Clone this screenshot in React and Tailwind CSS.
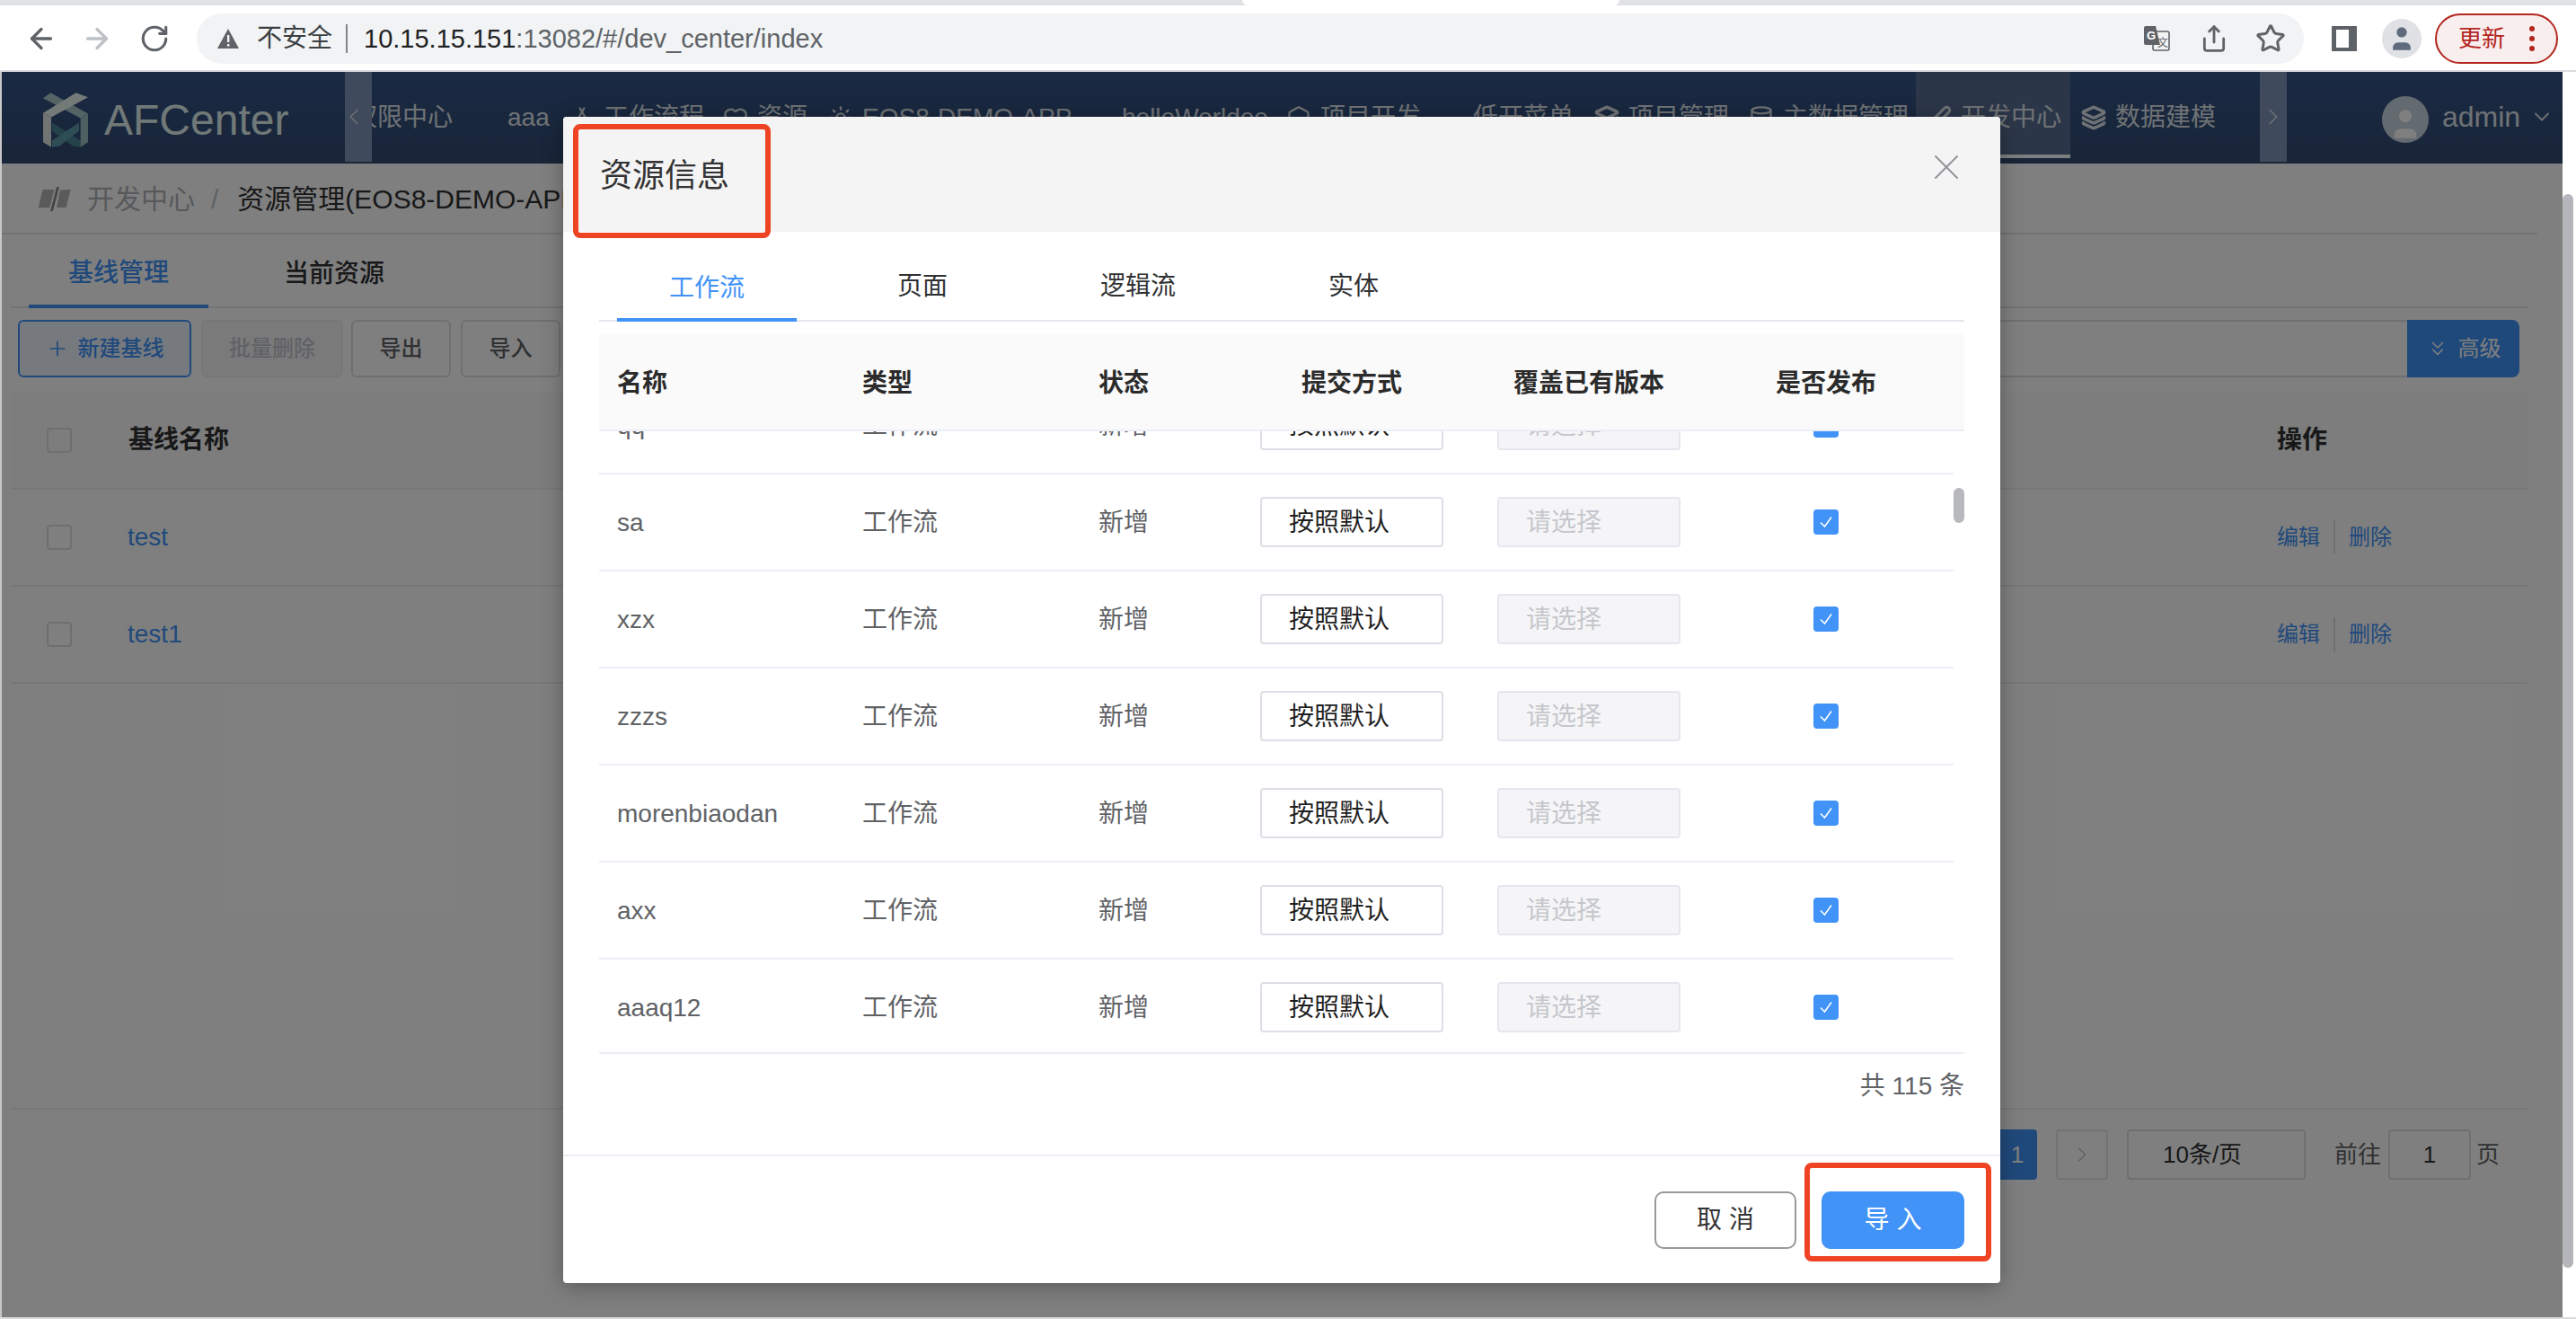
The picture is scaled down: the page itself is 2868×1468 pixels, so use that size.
import { ArrowLeft, ArrowRight, ChevronDown, ChevronLeft, ChevronRight, ChevronsDown, Database, Heart, Hexagon, Layers, PenLine, Plus, RotateCw, Share, Star, Sun, Tent, User, X } from "lucide-react";

const font = { fontFamily: '"Liberation Sans", "Noto Sans CJK SC", sans-serif' };

const rows = [
  { name: "qq" },
  { name: "sa" },
  { name: "xzx" },
  { name: "zzzs" },
  { name: "morenbiaodan" },
  { name: "axx" },
  { name: "aaaq12" },
];

function BrowserBar() {
  return (
    <div className="h-[80px] shrink-0 bg-white">
      <div className="flex h-[6px] bg-[#dfe1e5]">
        <div className="ml-[1383px] h-full w-[420px] rounded-b-[8px] bg-white" />
      </div>
      <div className="flex h-[74px] items-center border-b-2 border-[#dadce0] pt-[2px]">
        <ArrowLeft className="ml-[28px] text-[#5f6368]" size={36} strokeWidth={2.2} />
        <ArrowRight className="ml-[26px] text-[#bdc1c6]" size={36} strokeWidth={2.2} />
        <RotateCw className="ml-[29px] text-[#5f6368]" size={34} strokeWidth={2.2} />
        <div className="ml-[30px] flex h-[56px] w-[2346px] items-center rounded-full bg-[#f1f3f4]">
          <svg className="ml-[22px] text-[#5f6368]" width="26" height="24" viewBox="0 0 26 24">
            <path d="M13 1 25 23H1Z" fill="currentColor" />
            <rect x="12" y="8" width="2.4" height="8" fill="#f1f3f4" />
            <rect x="12" y="18" width="2.4" height="2.6" fill="#f1f3f4" />
          </svg>
          <span className="ml-[19px] text-[28px] leading-none text-[#3c4043]">不安全</span>
          <div className="ml-[15px] h-[32px] w-[2px] bg-[#80868b]" />
          <div className="ml-[18px] text-[29px] leading-none text-[#5f6368]">
            <span className="text-[#202124]">10.15.15.151</span>:13082/#/dev_center/index
          </div>
          <svg className="ml-auto" width="30" height="30" viewBox="0 0 30 30">
            <rect x="11" y="7" width="18" height="21" rx="2" fill="#f1f3f4" stroke="#5f6368" strokeWidth="1.6" />
            <path d="M3 1h11l5 21H3a2 2 0 0 1-2-2V3a2 2 0 0 1 2-2Z" fill="#5f6368" />
            <text x="4" y="16" fontSize="13" fontWeight="700" fill="#fff">G</text>
            <text x="16" y="24" fontSize="12" fill="#5f6368">文</text>
          </svg>
          <Share className="ml-[33px] text-[#5f6368]" size={32} strokeWidth={2.1} />
          <Star className="ml-[30px] mr-[20px] text-[#5f6368]" size={34} strokeWidth={2.1} />
        </div>
        <svg className="ml-[31px]" width="28" height="28" viewBox="0 0 28 28">
          <path d="M0 0h28v28H0Z" fill="#5f6368" />
          <rect x="5" y="4" width="14" height="20" fill="#fff" />
        </svg>
        <div className="ml-[28px] flex h-[44px] w-[44px] items-center justify-center overflow-hidden rounded-full bg-[#dfe1e5]">
          <User className="text-[#5f6b7d]" size={34} fill="currentColor" strokeWidth={0} />
        </div>
        <div className="ml-[15px] flex h-[56px] w-[137px] items-center rounded-full border-2 border-[#b3261e] bg-[#f9eeee]">
          <span className="ml-[24px] text-[26px] leading-none text-[#b3261e]">更新</span>
          <div className="ml-[27px] flex flex-col gap-[5px]">
            <span className="h-[6px] w-[6px] rounded-full bg-[#b3261e]" />
            <span className="h-[6px] w-[6px] rounded-full bg-[#b3261e]" />
            <span className="h-[6px] w-[6px] rounded-full bg-[#b3261e]" />
          </div>
        </div>
      </div>
    </div>
  );
}

function Logo() {
  return (
    <svg className="shrink-0" width="50" height="62" viewBox="0 0 150 185">
      <path d="M30 100 125 160V182L100 178 30 128Z" fill="#4a8494" />
      <path d="M120 100 30 160V182L55 178 120 128Z" fill="#5e9aa8" />
      <path d="M0 18 25 0 150 70 125 85Z" fill="#a8c8c8" />
      <path d="M0 68 110 0 150 15 27 82Z" fill="#e8f4f0" />
      <path d="M0 68 27 82V182L0 165Z" fill="#e0e8e4" />
      <path d="M125 85 150 70V165L125 182Z" fill="#9cc0c0" />
    </svg>
  );
}

function NavItem({ icon: Icon, label, width, active, iconStroke = 2 }) {
  return (
    <div className={`flex h-[96px] shrink-0 items-center ${width} ${active ? "border-b-[4px] border-[#f8ffff] bg-[#566c90] pt-[10px]" : "pt-[6px]"}`}>
      {Icon && <Icon className="ml-[12px] mr-[10px] shrink-0 text-[#dfe5ea]" size={28} strokeWidth={iconStroke} />}
      <span className="whitespace-nowrap text-[28px] leading-none text-[#dfe5ea]">{label}</span>
    </div>
  );
}

function TopNav() {
  return (
    <div className="flex h-[102px] shrink-0 items-start bg-gradient-to-b from-[#345488] to-[#324a70]">
      <div className="ml-[46px] mt-[23px] flex w-[336px] items-center gap-[18px]">
        <Logo />
        <span className="text-[48px] leading-none text-[#e0f2f0]">AFCenter</span>
      </div>
      <div className="flex h-[100px] w-[30px] shrink-0 items-center bg-[#7e95b8]">
        <ChevronLeft className="-ml-[5px] text-[#dfe5ea]" size={30} strokeWidth={1.2} />
      </div>
      <div className="flex h-[96px] w-[2102px] overflow-hidden">
        <div className="flex shrink-0 -translate-x-[22px] items-start">
          <NavItem label="权限中心" width="w-[173px]" />
          <NavItem label="aaa" width="w-[57px]" />
          <NavItem icon={Tent} label="工作流程" width="w-[171px]" />
          <NavItem icon={Heart} label="资源" width="w-[117px]" />
          <NavItem icon={Sun} label="EOS8-DEMO-APP" width="w-[339px]" />
          <NavItem label="helloWorldee" width="w-[171px]" />
          <NavItem icon={Hexagon} label="项目开发" width="w-[220px]" />
          <NavItem label="低开菜单" width="w-[123px]" />
          <NavItem icon={Layers} label="项目管理" width="w-[172px]" iconStroke={3} />
          <NavItem icon={Database} label="主数据管理" width="w-[198px]" />
          <NavItem icon={PenLine} label="开发中心" width="w-[172px]" iconStroke={2.6} active />
          <NavItem icon={Layers} label="数据建模" width="w-[170px]" iconStroke={3} />
        </div>
      </div>
      <div className="flex h-[100px] w-[30px] shrink-0 items-center bg-[#7e95b8]">
        <ChevronRight className="text-[#dfe5ea]" size={30} strokeWidth={1.2} />
      </div>
      <div className="ml-[106px] mt-[27px] flex h-[52px] w-[52px] shrink-0 items-end justify-center overflow-hidden rounded-full bg-[#c6d4e0]">
        <User className="text-white" size={42} fill="currentColor" strokeWidth={0} />
      </div>
      <span className="ml-[15px] mt-[34px] text-[32px] leading-none text-[#dfe5ea]">admin</span>
      <ChevronDown className="ml-[10px] mt-[36px] text-[#dfe5ea]" size={28} strokeWidth={1.6} />
    </div>
  );
}

function Checkbox() {
  return <div className="h-[28px] w-[28px] rounded-[4px] border-2 border-[#dcdfe6]" />;
}

function BaselineRow({ name }) {
  return (
    <div className="flex h-[108px] items-center border-b-2 border-[#ebeef5] pl-[40px]">
      <Checkbox />
      <span className="ml-[62px] text-[28px] leading-none text-[#4193f7]">{name}</span>
      <div className="ml-auto flex w-[279px] items-center text-[24px] leading-none text-[#4193f7]">
        <span>编辑</span>
        <div className="mx-[15px] h-[38px] w-[2px] bg-[#dcdfe6]" />
        <span>删除</span>
      </div>
    </div>
  );
}

function PageBody() {
  return (
    <div className="flex min-w-0 flex-1 flex-col">
      <TopNav />
      <div className="mr-[28px] flex h-[79px] items-center border-b-2 border-[#e4e7ed] pl-[40px] pt-[2px]">
        <svg width="37" height="28" viewBox="0 -2 37 28">
          <path d="M5.6 1H18.3L13.3 21H.6Z" fill="#b4b4b4" />
          <path d="M21 -2H24L17 25H14Z" fill="#8c8c8c" />
          <path d="M25 1.6 36.6 1 31.6 21H21Z" fill="#b4b4b4" />
        </svg>
        <span className="ml-[18px] text-[30px] leading-none text-[#b0b3b8]">开发中心</span>
        <span className="ml-[18px] text-[30px] leading-none text-[#c0c4cc]">/</span>
        <span className="ml-[21px] whitespace-nowrap text-[30px] leading-none text-[#303133]">资源管理(EOS8-DEMO-APP)</span>
      </div>
      <div className="ml-[10px] mr-[39px] flex h-[82px] items-end border-b-2 border-[#e4e7ed]">
        <div className="-mb-[2px] ml-[20px] flex h-[78px] w-[200px] items-center justify-center border-b-4 border-[#4193f7] pt-[3px] text-[28px] leading-none font-medium text-[#4193f7]">基线管理</div>
        <div className="-mb-[2px] ml-[40px] flex h-[78px] w-[200px] items-center justify-center pt-[1px] text-[28px] leading-none font-medium text-[#303133]">当前资源</div>
      </div>
      <div className="ml-[18px] mr-[48px] mt-[13px] flex h-[64px]">
        <button className="flex h-full w-[193px] items-center justify-center gap-[10px] rounded-[6px] border-2 border-[#4193f7] bg-[#ecf5ff] text-[24px] leading-none font-medium text-[#4193f7]">
          <Plus size={26} strokeWidth={1.6} />
          新建基线
        </button>
        <button className="ml-[11px] h-full w-[158px] rounded-[6px] border-2 border-[#ebeef5] bg-[#f5f5f5] text-[24px] leading-none font-medium text-[#c0c4cc]">批量删除</button>
        <button className="ml-[9px] h-full w-[111px] rounded-[6px] border-2 border-[#dcdfe6] bg-white text-[24px] leading-none font-medium text-[#606266]">导出</button>
        <button className="ml-[11px] h-full w-[111px] rounded-[6px] border-2 border-[#dcdfe6] bg-white text-[24px] leading-none font-medium text-[#606266]">导入</button>
        <div className="ml-[40px] h-full flex-1 border-y-2 border-[#dcdfe6]" />
        <button className="flex h-full w-[125px] items-center justify-center gap-[10px] rounded-r-[8px] bg-[#4193f7] text-[24px] leading-none text-white">
          <ChevronsDown size={26} strokeWidth={1.4} />
          高级
        </button>
      </div>
      <div className="ml-[10px] mr-[39px] mt-[16px]">
        <div className="flex h-[109px] items-center border-b-2 border-[#ebeef5] bg-[#fafafa] pl-[40px]">
          <Checkbox />
          <span className="ml-[63px] text-[28px] leading-none font-semibold text-[#303133]">基线名称</span>
          <span className="ml-auto w-[279px] text-[28px] leading-none font-semibold text-[#303133]">操作</span>
        </div>
        <BaselineRow name="test" />
        <BaselineRow name="test1" />
      </div>
      <div className="ml-[10px] mr-[39px] mt-[472px] flex h-[80px] items-end justify-end border-t-2 border-[#ebeef5] text-[26px] leading-none text-[#606266]">
        <div className="flex h-[56px] items-center">
          <div className="flex h-full w-[44px] items-center justify-center rounded-[4px] bg-[#4193f7] text-white">1</div>
          <div className="ml-[21px] flex h-full w-[58px] items-center justify-center rounded-[4px] border-2 border-[#e4e7ed]">
            <ChevronRight className="text-[#c0c4cc]" size={28} strokeWidth={1.4} />
          </div>
          <div className="ml-[21px] flex h-full w-[199px] items-center rounded-[4px] border-2 border-[#dcdfe6] pl-[38px] text-[#303133]">10条/页</div>
          <span className="ml-[32px]">前往</span>
          <div className="ml-[8px] flex h-full w-[92px] items-center justify-center rounded-[4px] border-2 border-[#dcdfe6] text-[#303133]">1</div>
          <span className="ml-[6px] mr-[31px]">页</span>
        </div>
      </div>
    </div>
  );
}

function ResourceRow({ name }) {
  return (
    <div className="grid h-[108px] grid-cols-[273px_263px_170px_264px_264px_264px] items-center border-b-2 border-[#ebeef5] text-[28px] leading-none text-[#606266]">
      <span className="pl-[20px] pt-[2px]">{name}</span>
      <span className="pl-[20px] pt-[2px]">工作流</span>
      <span className="pl-[20px] pt-[2px]">新增</span>
      <div className="flex justify-center">
        <div className="flex h-[56px] w-[204px] items-center rounded-[4px] border-2 border-[#dcdfe6] pl-[30px] pt-[2px] text-[#1f1f1f]">按照默认</div>
      </div>
      <div className="flex justify-center">
        <div className="flex h-[56px] w-[204px] items-center rounded-[4px] border-2 border-[#e4e7ed] bg-[#f5f5f7] pl-[30px] pt-[2px] text-[#c5c7cc]">请选择</div>
      </div>
      <div className="flex justify-center">
        <div className="flex h-[28px] w-[28px] items-center justify-center rounded-[4px] bg-[#4193f7]">
          <svg width="18" height="18" viewBox="0 0 18 18" fill="none" stroke="#fff" strokeWidth="1.6">
            <path d="M3 9.5 7.5 14 15 3.5" />
          </svg>
        </div>
      </div>
    </div>
  );
}

function ResourceModal() {
  return (
    <div className="absolute left-[625px] top-[50px] flex h-[1298px] w-[1600px] flex-col rounded-[4px] bg-white shadow-[0_4px_24px_rgba(0,0,0,0.3)]">
      <div className="flex h-[128px] shrink-0 items-start justify-between rounded-t-[4px] bg-[#f4f4f4] pl-[41px] pr-[36px]">
        <span className="mt-[48px] text-[36px] leading-none text-[#333333]">资源信息</span>
        <X className="mt-[32px] text-[#909399]" size={48} strokeWidth={1} />
      </div>
      <div className="mx-[40px] flex h-[100px] shrink-0 items-end border-b-2 border-[#e4e7ed] text-[28px] leading-none text-[#303133]">
        <div className="-mb-[2px] ml-[20px] flex h-[54px] w-[200px] items-start justify-center border-b-4 border-[#4193f7] pt-[3px] text-[#4193f7]">工作流</div>
        <div className="ml-[40px] flex h-[54px] w-[200px] items-start justify-center pt-[3px]">页面</div>
        <div className="ml-[40px] flex h-[54px] w-[200px] items-start justify-center pt-[3px]">逻辑流</div>
        <div className="ml-[40px] flex h-[54px] w-[200px] items-start justify-center pt-[3px]">实体</div>
      </div>
      <div className="relative mx-[40px] mt-[14px] shrink-0">
        <div className="grid h-[108px] grid-cols-[273px_263px_170px_264px_264px_264px] items-center border-b-2 border-[#ebeef5] bg-[#fafafa] pt-[3px] text-[28px] leading-none font-semibold text-[#2b2b2b]">
          <span className="pl-[20px]">名称</span>
          <span className="pl-[20px]">类型</span>
          <span className="pl-[20px]">状态</span>
          <span className="text-center">提交方式</span>
          <span className="text-center">覆盖已有版本</span>
          <span className="text-center">是否发布</span>
        </div>
        <div className="h-[693px] overflow-hidden border-b-2 border-[#ebeef5]">
          <div className="-mt-[60px] w-[1508px]">
            {rows.map((r) => (
              <ResourceRow key={r.name} name={r.name} />
            ))}
          </div>
        </div>
        <div className="absolute right-0 top-[171px] h-[39px] w-[12px] rounded-full bg-[#b8b9bd]" />
      </div>
      <div className="mx-[40px] mt-[22px] shrink-0 text-right text-[28px] leading-none text-[#606266]">共 115 条</div>
      <div className="mt-[62px] flex h-[144px] shrink-0 items-start justify-end border-t-2 border-[#ebeef5] pr-[40px]">
        <button className="mt-[39px] h-[64px] w-[158px] rounded-[10px] border-2 border-[#999999] bg-white text-[28px] leading-none text-[#333333]">取 消</button>
        <button className="ml-[28px] mt-[39px] h-[64px] w-[159px] rounded-[10px] bg-[#4193f7] text-[28px] leading-none text-white">导 入</button>
      </div>
    </div>
  );
}

export default function App() {
  return (
    <div className="flex h-[1468px] w-[2868px] flex-col overflow-hidden bg-white" style={font}>
      <BrowserBar />
      <div className="flex min-h-0 flex-1">
        <div className="w-[2px] shrink-0 bg-[#c8c8c8]" />
        <div className="relative flex min-w-0 flex-1">
          <PageBody />
          <div className="absolute inset-0 bg-black/50" />
          <ResourceModal />
          {/* the two red marks drawn on top of the screenshot */}
          <div className="absolute left-[636px] top-[58px] h-[127px] w-[220px] rounded-[8px] border-[6px] border-[#ef4423]" />
          <div className="absolute left-[2007px] top-[1214px] h-[110px] w-[208px] rounded-[8px] border-[6px] border-[#ef4423]" />
        </div>
        <div className="w-[15px] shrink-0 bg-white pt-[136px]">
          <div className="h-[1195px] w-[12px] rounded-full bg-[#b5b6bb]" />
        </div>
      </div>
      <div className="h-[2px] shrink-0 bg-[#dcdcdc]" />
    </div>
  );
}
